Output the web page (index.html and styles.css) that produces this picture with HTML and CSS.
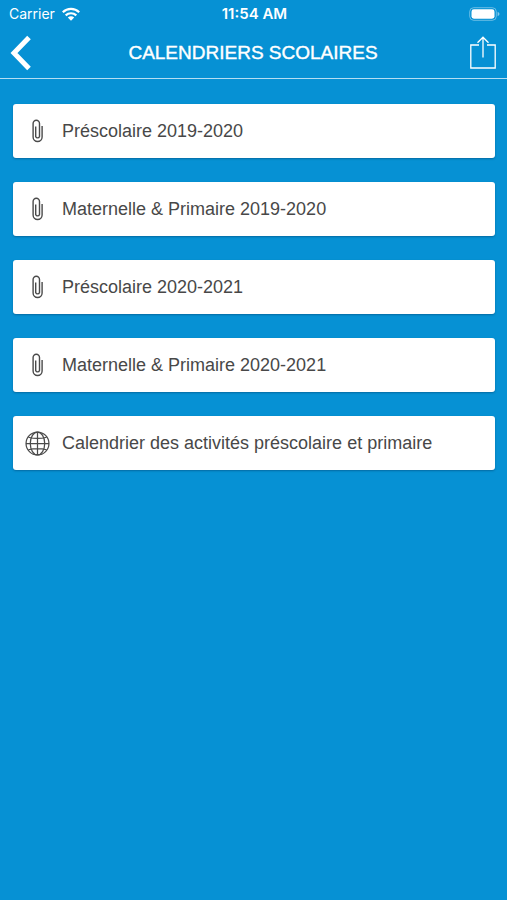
FILE: index.html
```html
<!DOCTYPE html>
<html lang="fr">
<head>
<meta charset="utf-8">
<meta name="viewport" content="width=device-width, initial-scale=1">
<title>Calendriers scolaires</title>
<link rel="stylesheet" href="styles.css">
</head>
<body>
<svg class="defs" width="0" height="0" aria-hidden="true">
  <symbol id="clip" viewBox="0 0 12 24">
    <path d="M8 6.500V4.500A3.200 3.200 0 0 0 1.600 4.500V18A4.500 4.500 0 0 0 10.600 18V7M8 6V17.500A2 2 0 0 1 4.200 17.500V7.500"/>
  </symbol>
</svg>
<div class="status">
  <div class="carrier">
    <span>Carrier</span>
    <svg width="18" height="14" viewBox="0 0 18 14" aria-hidden="true">
      <g fill="none" stroke="#fff" stroke-width="2.200">
        <path d="M.8 5.300C5.400.8 12.600.8 17.200 5.300"/>
        <path d="M3.700 8.400C6.700 5.500 11.300 5.500 14.300 8.400"/>
      </g>
      <path d="M9 13.700 5.800 10.500C7.600 8.900 10.400 8.900 12.200 10.500Z" fill="#fff"/>
    </svg>
  </div>
  <time class="clock">11:54 AM</time>
  <svg class="battery" width="31" height="14" viewBox="0 0 31 14" aria-hidden="true">
    <rect x=".7" y=".7" width="26.600" height="12.600" rx="4" fill="none" stroke="#fff" stroke-opacity=".4"/>
    <rect x="2.500" y="2.300" width="23" height="9.400" rx="2.400" fill="#fff"/>
    <path d="M28.600 4.700Q30.500 5.400 30.500 7T28.600 9.300Z" fill="#fff" fill-opacity=".5"/>
  </svg>
</div>
<header class="bar">
  <button class="icon-button" type="button" aria-label="Retour">
    <svg width="22" height="36" viewBox="0 0 22 36"><path d="M19 2.500 4 18 19 33.500" fill="none" stroke="#fff" stroke-width="5"/></svg>
  </button>
  <h1>CALENDRIERS SCOLAIRES</h1>
  <button class="icon-button share" type="button" aria-label="Partager">
    <svg width="26" height="34" viewBox="0 0 26 34"><path d="M9 9H.8V32H25.200V9H17M13 21.500V1.500M7.500 6.700 13 1.200 18.500 6.700" fill="none" stroke="#fff" stroke-width="1.300"/></svg>
  </button>
</header>
<main class="list">
  <a class="card" href="#prescolaire-2019"><svg class="icon" viewBox="0 0 12 24"><use href="#clip"/></svg><span>Préscolaire 2019-2020</span></a>
  <a class="card" href="#primaire-2019"><svg class="icon" viewBox="0 0 12 24"><use href="#clip"/></svg><span>Maternelle &amp; Primaire 2019-2020</span></a>
  <a class="card" href="#prescolaire-2020"><svg class="icon" viewBox="0 0 12 24"><use href="#clip"/></svg><span>Préscolaire 2020-2021</span></a>
  <a class="card" href="#primaire-2020"><svg class="icon" viewBox="0 0 12 24"><use href="#clip"/></svg><span>Maternelle &amp; Primaire 2020-2021</span></a>
  <a class="card" href="#activites"><svg class="icon globe" viewBox="0 0 26 26"><circle cx="13" cy="13" r="11.900"/><ellipse cx="13" cy="13" rx="7.500" ry="11.900"/><path d="M13 1V25M1 13H25M3.500 6.500C9 8 17 8 22.500 6.500M3.500 19.500C9 18 17 18 22.500 19.500"/></svg><span>Calendrier des activités préscolaire et primaire</span></a>
</main>
</body>
</html>
```
FILE: styles.css
```css
* {
  box-sizing: border-box;
}

body {
  margin: 0;
  min-height: 100vh;
  background: #0691d4;
  color: #fff;
  font-family: "Liberation Sans", Arial, sans-serif;
}

.defs {
  position: absolute;
}

.status {
  display: grid;
  grid-template-columns: 1fr auto 1fr;
  align-items: center;
  height: 27px;
  padding: 0 7px 0 9px;
  font: 14px/20px Inter, sans-serif;
}

.carrier {
  display: flex;
  align-items: center;
  gap: 7px;
}

.clock {
  font-size: 15px;
  font-weight: 600;
}

.battery {
  justify-self: end;
}

.bar {
  display: grid;
  grid-template-columns: 1fr auto 1fr;
  align-items: center;
  height: 52px;
  padding: 0 11px 0 10px;
  border-bottom: 1px solid #b4def3;
}

h1 {
  margin: 0;
  font-size: 19px;
  font-weight: 400;
  line-height: 24px;
  -webkit-text-stroke: 0.4px #fff;
}

.icon-button {
  display: flex;
  justify-self: start;
  padding: 0;
  border: 0;
  background: none;
}

.share {
  justify-self: end;
}

.list {
  display: flex;
  flex-direction: column;
  gap: 24px;
  padding: 25px 12px 24px 13px;
}

.card {
  display: flex;
  align-items: center;
  gap: 12px;
  min-height: 54px;
  padding: 0 12px;
  border-radius: 3px;
  background: #fff;
  box-shadow: 0 1px 2px rgba(0, 50, 90, 0.4);
  color: #484848;
  font-size: 18px;
  line-height: 24px;
  text-decoration: none;
}

.icon {
  flex: none;
  width: 25px;
  height: 24px;
  fill: none;
  stroke: #4a4a4a;
  stroke-width: 1.4;
}

.globe {
  height: 25px;
  stroke-width: 1.3;
}
```
